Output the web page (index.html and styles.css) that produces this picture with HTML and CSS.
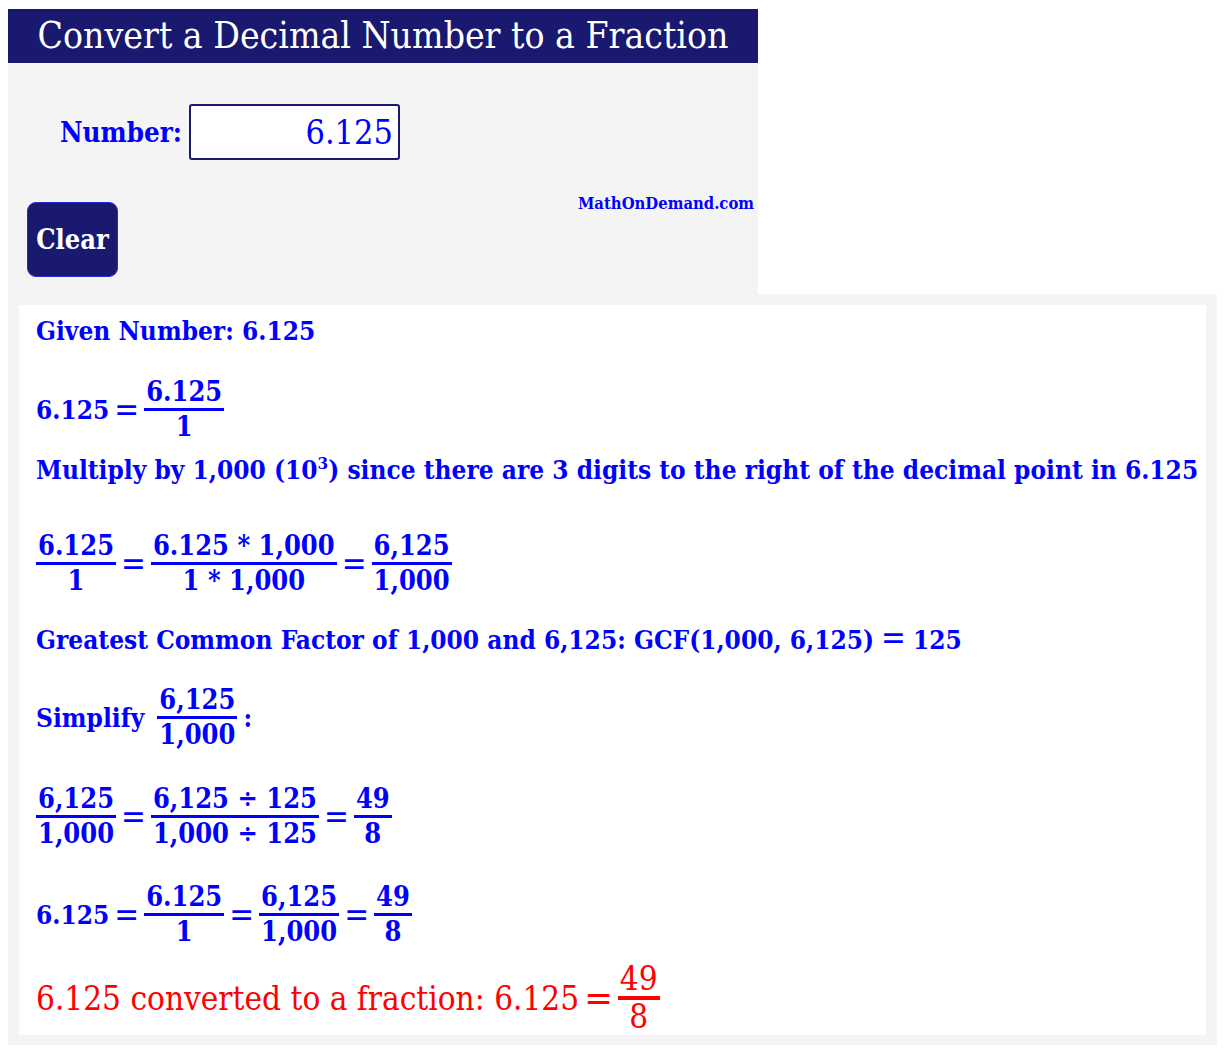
FILE: index.html
```html
<!DOCTYPE html>
<html lang="en">
<head>
  <meta charset="UTF-8">
  <title>Convert a Decimal Number to a Fraction</title>
  <link rel="stylesheet" href="styles.css">
</head>
<body>
  <div class="calc">
    <h1 class="calc-title">Convert a Decimal Number to a Fraction</h1>
    <div class="calc-panel">
      <div class="field">
        <label for="number">Number:</label>
        <input type="text" id="number" value="6.125">
      </div>
      <div class="actions">
        <button class="clear">Clear</button>
        <span class="brand">MathOnDemand.com</span>
      </div>
    </div>
  </div>

  <div class="result">
    <div class="result-inner">
      <div class="row r1">Given Number: 6.125</div>

      <div class="row r2">
        <span>6.125</span><span class="eq">=</span>
        <span class="frac"><span class="num">6.125</span><span class="den">1</span></span>
      </div>

      <div class="row r3"><span>Multiply by 1,000 (10<sup>3</sup>) since there are 3 digits to the right of the decimal point in 6.125</span></div>

      <div class="row r4">
        <span class="frac"><span class="num">6.125</span><span class="den">1</span></span>
        <span class="eq">=</span>
        <span class="frac"><span class="num">6.125 * 1,000</span><span class="den">1 * 1,000</span></span>
        <span class="eq">=</span>
        <span class="frac"><span class="num">6,125</span><span class="den">1,000</span></span>
      </div>

      <div class="row r5"><span>Greatest Common Factor of 1,000 and 6,125: GCF(1,000, 6,125)<span class="eq-inline">=</span>125</span></div>

      <div class="row r6">
        <span class="label">Simplify</span>
        <span class="frac"><span class="num">6,125</span><span class="den">1,000</span></span>
        <span class="colon">:</span>
      </div>

      <div class="row r7">
        <span class="frac"><span class="num">6,125</span><span class="den">1,000</span></span>
        <span class="eq">=</span>
        <span class="frac"><span class="num">6,125 &divide; 125</span><span class="den">1,000 &divide; 125</span></span>
        <span class="eq">=</span>
        <span class="frac"><span class="num">49</span><span class="den">8</span></span>
      </div>

      <div class="row r8">
        <span>6.125</span><span class="eq">=</span>
        <span class="frac"><span class="num">6.125</span><span class="den">1</span></span>
        <span class="eq">=</span>
        <span class="frac"><span class="num">6,125</span><span class="den">1,000</span></span>
        <span class="eq">=</span>
        <span class="frac"><span class="num">49</span><span class="den">8</span></span>
      </div>

      <div class="row r9 answer">
        <span>6.125 converted to a fraction: 6.125</span><span class="eq">=</span>
        <span class="frac"><span class="num">49</span><span class="den">8</span></span>
      </div>
    </div>
  </div>
</body>
</html>
```

FILE: styles.css
```css
body {
  margin: 8px;
  padding-top: 1px;
  font-family: "DejaVu Serif Condensed", "DejaVu Serif", serif;
  background: #fff;
}

.calc {
  width: 750px;
  background-color: #f4f4f4;
}

.calc-title {
  margin: 0;
  height: 54px;
  line-height: 54px;
  background-color: #191970;
  color: #fff;
  font-size: 37px;
  font-weight: normal;
  text-align: center;
}

.calc-panel {
  height: 231px;
  padding: 0 4px 0 19px;
  box-sizing: border-box;
}

.field {
  display: flex;
  align-items: center;
  gap: 7px;
  padding: 41px 0 0 33px;
}

.field label {
  color: #0000ff;
  font-size: 27.5px;
  font-weight: bold;
}

.field input {
  width: 211px;
  height: 56px;
  box-sizing: border-box;
  border: 2px solid #191970;
  border-radius: 3px;
  padding: 0 5px;
  font-family: inherit;
  font-size: 34px;
  color: #0000ff;
  text-align: right;
  background: #fff;
}

.actions {
  display: flex;
  justify-content: space-between;
  align-items: flex-start;
  margin-top: 42px;
}

.clear {
  width: 91px;
  height: 75px;
  background-color: #191970;
  color: #fff;
  border: 1px solid #2a2ad0;
  border-radius: 9px;
  font-family: inherit;
  font-size: 27px;
  font-weight: bold;
  cursor: pointer;
}

.brand {
  color: #0000ff;
  font-size: 16.5px;
  font-weight: bold;
  margin-top: -8px;
}

.result {
  background-color: #f4f4f4;
  padding: 11px 11px 10px;
}

.result-inner {
  background-color: #fff;
  padding: 8px 17px 1px;
  color: #0000ff;
  font-size: 26px;
  font-weight: bold;
}

.row {
  display: flex;
  align-items: center;
  white-space: nowrap;
  min-height: 36px;
}

.row sup {
  font-size: 17px;
  line-height: 0;
  vertical-align: 10px;
}

.frac {
  display: inline-flex;
  flex-direction: column;
  align-items: stretch;
  text-align: center;
  font-size: 27px;
  line-height: 32px;
}

.frac .num {
  border-bottom: 3px solid currentColor;
  padding: 0 2px;
}

.frac .den {
  padding: 0 2px;
}

.eq {
  margin: 0 5px;
  font-size: 33px;
  line-height: 1;
  font-weight: normal;
}

.eq-inline {
  margin: 0 7px;
  font-size: 33px;
  line-height: 0;
  font-weight: normal;
}

.label {
  margin-right: 13px;
}

.colon {
  margin-left: 6px;
}

.r2 { margin-top: 27px; }
.r3 { margin-top: 9px; }
.r4 { margin-top: 42px; }
.r5 { margin-top: 25px; }
.r6 { margin-top: 26px; }
.r7 { margin-top: 32px; }
.r8 { margin-top: 31px; }
.r9 { margin-top: 14px; }

.answer {
  color: #ff0000;
  font-size: 33px;
  font-weight: normal;
}

.answer .eq {
  font-size: 38px;
}

.answer .frac {
  font-size: 33px;
  line-height: 34px;
}

.answer .frac .num {
  border-bottom-width: 4px;
}
```
